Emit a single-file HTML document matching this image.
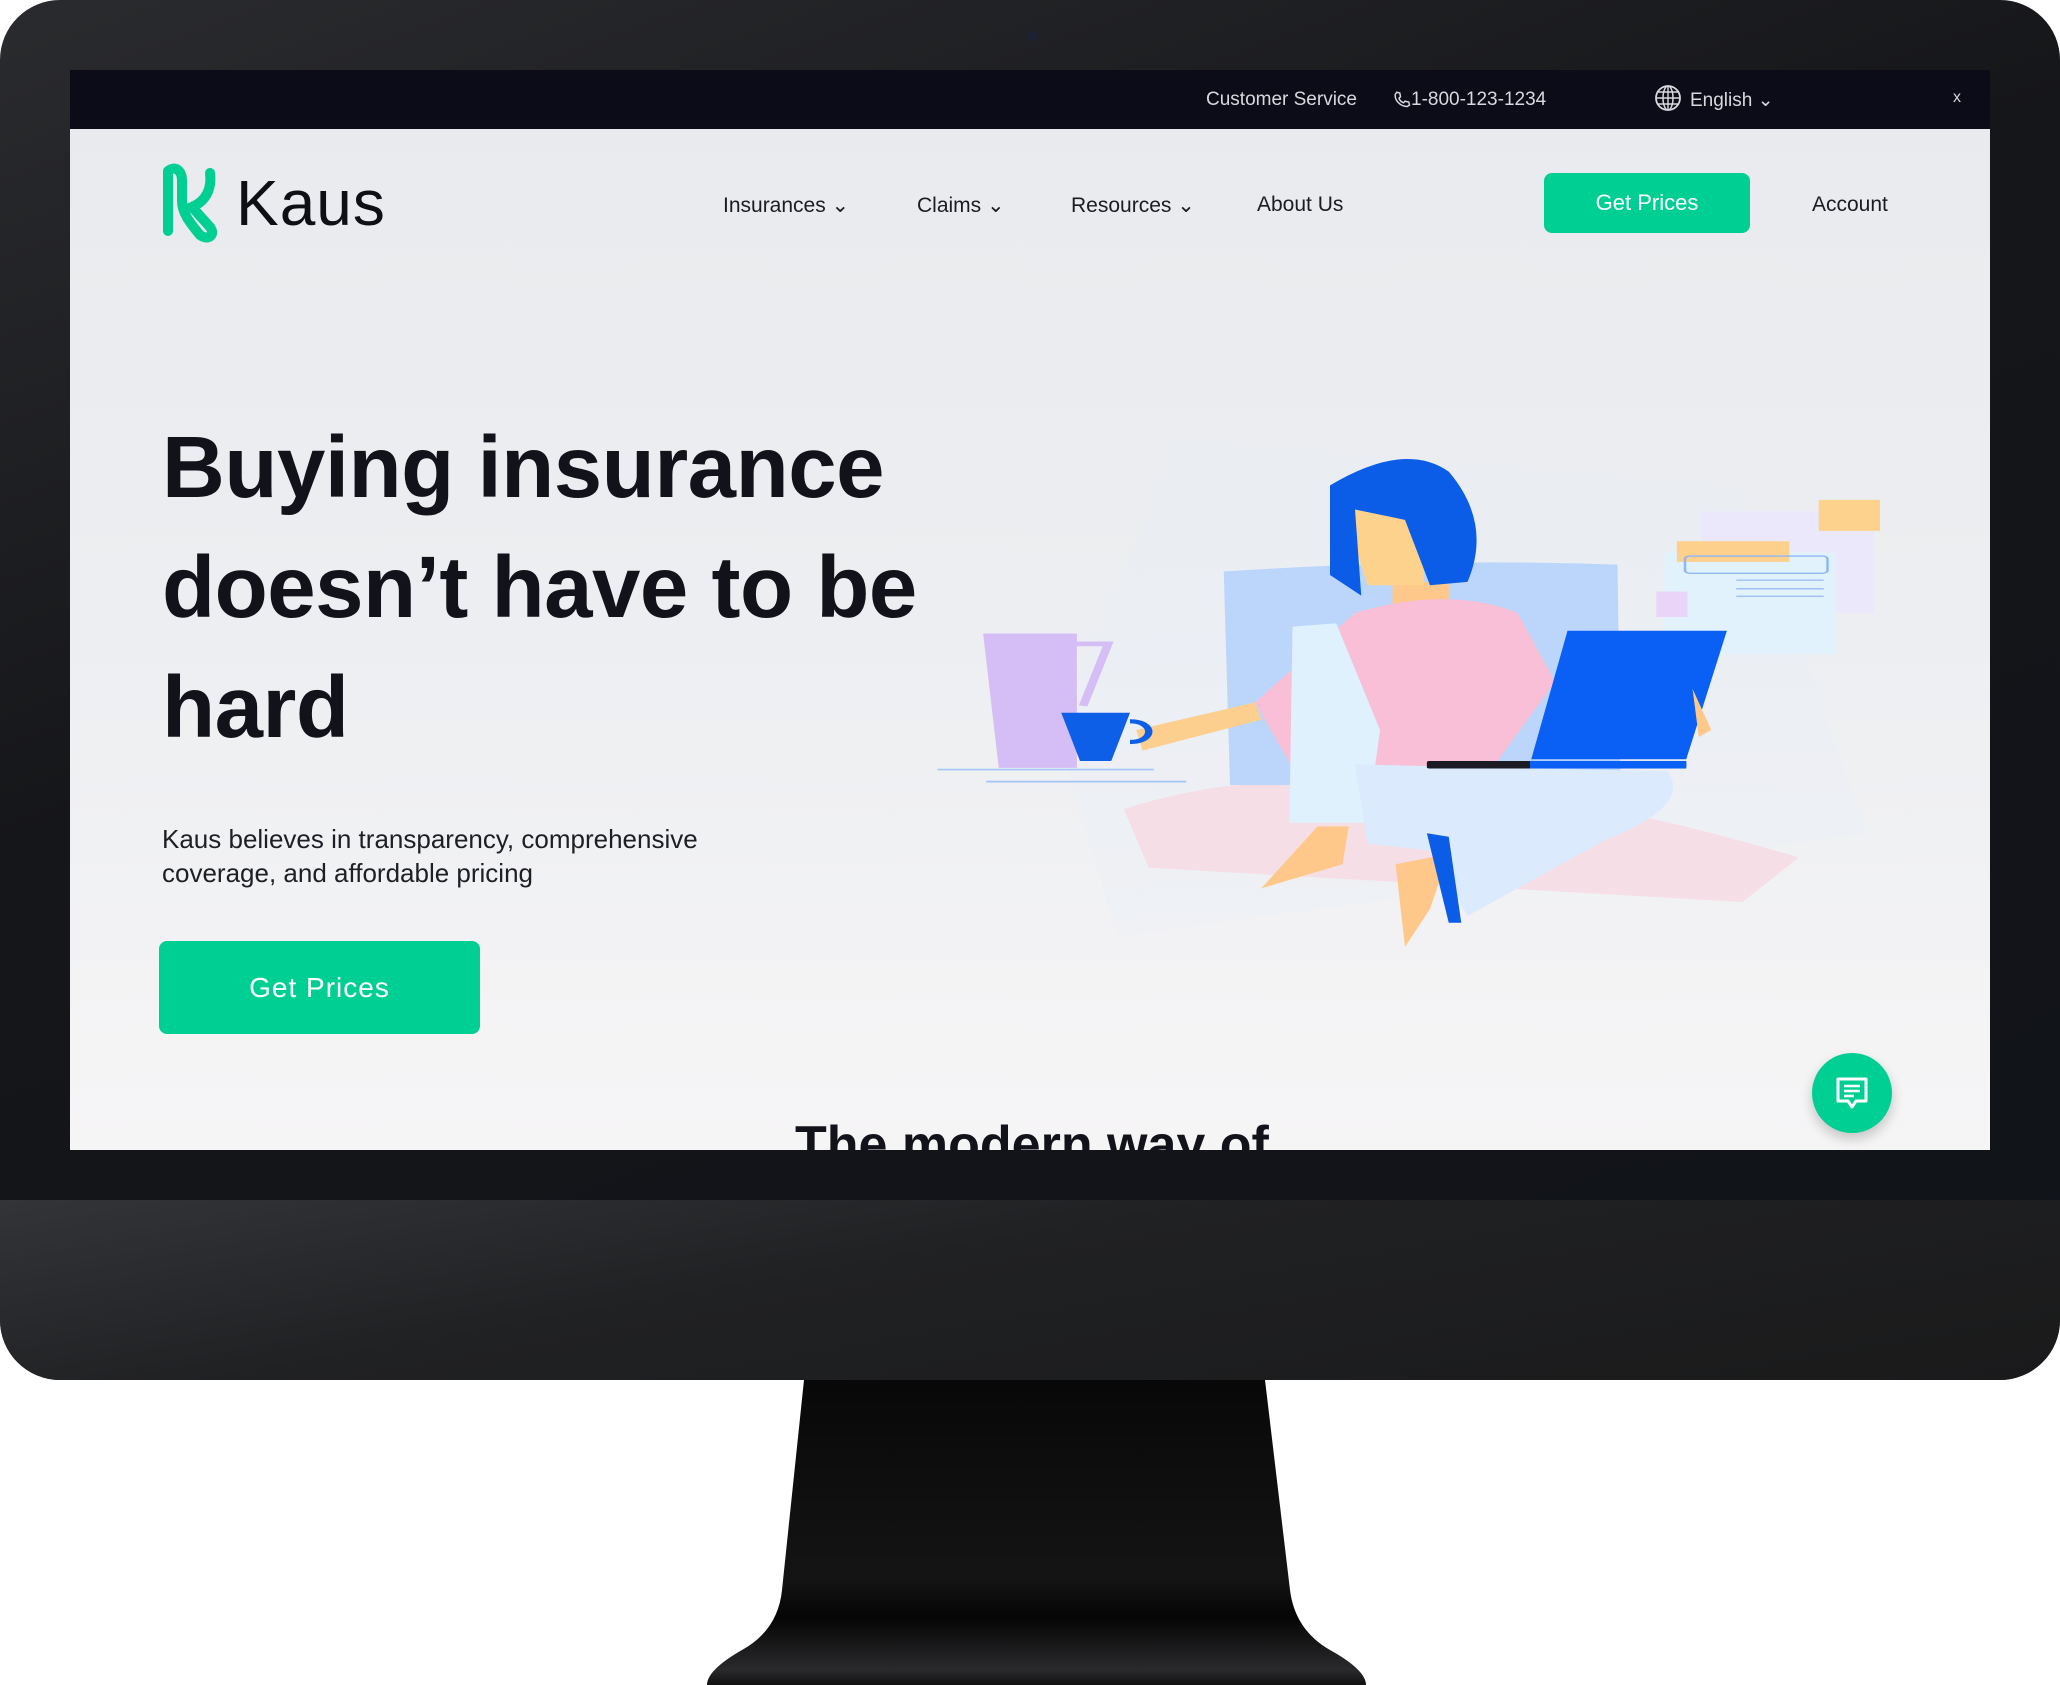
<!DOCTYPE html>
<html><head><meta charset="utf-8"><style>
*{margin:0;padding:0;box-sizing:border-box}
body{width:2060px;height:1685px;background:#fff;position:relative;overflow:hidden;font-family:"Liberation Sans",sans-serif}
.mon{position:absolute;left:0;top:0;width:2060px;height:1380px;border-radius:60px;background:linear-gradient(160deg,#2a2b2e,#151619 40%,#101319);overflow:hidden}
.chin{position:absolute;left:0;top:1200px;width:2060px;height:180px;background:linear-gradient(170deg,#333438,#202123 40%,#1a1a1b)}
.screen{position:absolute;left:70px;top:70px;width:1920px;height:1080px;background:linear-gradient(180deg,#e8eaed,#eceef1 50%,#f6f5f6);overflow:hidden}
.top{position:absolute;left:0;top:0;width:1920px;height:59px;background:#0b0c17;color:#d8d9de;font-size:19px}
.top span{position:absolute;top:19px}
.nav{position:absolute;top:123px;font-size:21px;color:#1b1c22}
.btn{position:absolute;background:#00cf93;color:#fff;border-radius:8px;text-align:center}
h1{position:absolute;left:92px;top:338px;font-size:87px;line-height:120px;font-weight:bold;color:#12131a;letter-spacing:-0.5px}
p{position:absolute;left:92px;top:752px;font-size:26px;line-height:34px;color:#1e1f25}
</style></head><body>
<div class="mon">
<div style="position:absolute;left:1027px;top:31px;width:10px;height:10px;border-radius:50%;background:#1d2233"></div>
<div class="chin"></div>
<div class="screen">
 <div class="top">
  <span style="left:1136px">Customer Service</span>
  <span style="left:1323px">
   <svg width="18" height="18" viewBox="0 0 24 24" style="vertical-align:-3px"><path d="M5 3l4 1 1 5-2 2c1 3 3 5 6 6l2-2 5 1 1 4-3 2C10 22 2 14 3 6z" fill="none" stroke="#d8d9de" stroke-width="2"/></svg>1-800-123-1234</span>
  <span style="left:1584px;top:14px"><svg width="28" height="28" viewBox="0 0 28 28"><circle cx="14" cy="14" r="12" fill="none" stroke="#d8d9de" stroke-width="1.8"/><ellipse cx="14" cy="14" rx="5" ry="12" fill="none" stroke="#d8d9de" stroke-width="1.5"/><path d="M2 14h24M4 8h20M4 20h20M14 2v24" stroke="#d8d9de" stroke-width="1.4"/></svg></span>
  <span style="left:1620px">English ⌄</span>
  <span style="left:1883px;font-size:16px">x</span>
 </div>
 <svg style="position:absolute;left:88px;top:93px" width="80" height="82" viewBox="0 0 80 82"><path d="M10 8v60M10 8c8-6 14 0 14 10v20c0 12 8 22 18 34 8 6 16 0 10-8L34 44c14-6 20-18 18-34" fill="none" stroke="#00cf93" stroke-width="10" stroke-linecap="round"/></svg>
 <div style="position:absolute;left:166px;top:96px;font-size:64px;color:#0e0f14;letter-spacing:1px">Kaus</div>
 <div class="nav" style="left:653px">Insurances ⌄</div>
 <div class="nav" style="left:847px">Claims ⌄</div>
 <div class="nav" style="left:1001px">Resources ⌄</div>
 <div class="nav" style="left:1187px">About Us</div>
 <div class="btn" style="left:1474px;top:103px;width:206px;height:60px;line-height:60px;font-size:22px">Get Prices</div>
 <div class="nav" style="left:1742px">Account</div>
 <h1>Buying insurance<br>doesn’t have to be<br>hard</h1>
 <p>Kaus believes in transparency, comprehensive<br>coverage, and affordable pricing</p>
 <div class="btn" style="left:89px;top:871px;width:321px;height:93px;line-height:93px;font-size:28px;letter-spacing:1px">Get Prices</div>
 <div style="position:absolute;left:1742px;top:983px;width:80px;height:80px;border-radius:50%;background:#00cf93;box-shadow:0 6px 12px rgba(0,0,0,.2)">
  <svg width="80" height="80" viewBox="0 0 80 80"><path d="M26 26h28v22H44l-4 6-4-6H26z" fill="none" stroke="#fff" stroke-width="3" stroke-linejoin="round"/><path d="M32 33h16M32 38h16M32 43h10" stroke="#fff" stroke-width="2.5"/></svg></div>
 <div style="position:absolute;left:725px;top:1045px;font-size:52px;font-weight:bold;color:#12131a">The modern way of</div>
 <svg style="position:absolute;left:860px;top:350px" width="980" height="540" viewBox="0 0 1568 1568" preserveAspectRatio="none">
  <path d="M200 900 L400 60 L1300 200 L1500 1200 L300 1500z" fill="#e8eefa" opacity=".3"/>
  <path d="M310 1130 Q700 900 1390 1270 L1300 1400 L350 1300z" fill="#f8d9e4" opacity=".8"/>
  <path d="M470 440 Q800 400 1100 420 L1105 1060 L480 1060z" fill="#bcd6fb"/>
  <rect x="1235" y="265" width="275" height="295" fill="#ece8fb"/>
  <rect x="1175" y="385" width="275" height="295" fill="#e1f2fd"/>
  <rect x="1422" y="232" width="98" height="90" fill="#fdd28c"/>
  <rect x="1195" y="352" width="180" height="60" fill="#fdd08c"/>
  <rect x="1208" y="395" width="228" height="50" rx="8" fill="none" stroke="#8fb6f7" stroke-width="4"/>
  <path d="M1290 465h140M1290 490h140M1290 512h140" stroke="#9ec0f7" stroke-width="4"/>
  <rect x="1162" y="498" width="50" height="74" fill="#ead5f9"/>
  <path d="M85 620h150v390H110z" fill="#d5bdf5"/>
  <path d="M230 650h55l-40 180" fill="none" stroke="#d5bdf5" stroke-width="14"/>
  <path d="M12 1015h346M90 1050h320" stroke="#a5c4f8" stroke-width="5"/>
  <path d="M330 900 L520 820 L530 870 L340 960z" fill="#fdcf8e"/>
  <path d="M210 850h110l-30 140h-50z" fill="#0d5fe8"/>
  <path d="M320 875c40 0 40 60 0 60" fill="none" stroke="#0d5fe8" stroke-width="12"/>
  <path d="M740 470h90v140h-90z" fill="#fdc88a"/>
  <path d="M680 560 Q830 480 940 560 L1000 760 L900 1010 L580 1010 L520 820z" fill="#f8bfd6"/>
  <path d="M660 250 L790 260 L790 480 L700 480z" fill="#fdd28c"/>
  <path d="M640 190 Q760 60 830 150 Q900 300 860 470 L800 480 L760 290 L680 260 L690 510 L640 450z" fill="#0b5ce6"/>
  <path d="M580 600 L650 590 L720 900 L700 1170 L575 1170z" fill="#dff1fd"/>
  <path d="M680 1000 L1180 1020 Q1220 1120 1080 1220 L860 1440 L800 1250 L700 1230z" fill="#dbeafc"/>
  <path d="M530 1360 L620 1180 L670 1180 L660 1290z" fill="#fdc88a"/>
  <path d="M745 1290 L830 1260 L800 1420 L760 1530z" fill="#fdc88a"/>
  <path d="M795 1200 L830 1210 L850 1460 L830 1460z" fill="#0b5ce6"/>
  <path d="M1020 612 L1275 612 L1210 985 L962 985z" fill="#0a5ff4"/>
  <rect x="795" y="990" width="415" height="22" rx="4" fill="#1a1b24"/>
  <rect x="960" y="990" width="250" height="22" fill="#0a5ff4"/>
  <path d="M1220 780 L1250 900 L1230 920z" fill="#fdc88a"/>
 </svg>
</div>
</div>
<svg style="position:absolute;left:0;top:1380px" width="2060" height="305" viewBox="0 1380 2060 305">
 <defs><linearGradient id="g" x1="0" y1="0" x2="0" y2="1"><stop offset="0" stop-color="#080808"/><stop offset=".65" stop-color="#141415"/><stop offset=".78" stop-color="#050505"/><stop offset=".95" stop-color="#2a2a2d"/><stop offset="1" stop-color="#111"/></linearGradient></defs>
 <path d="M804 1380 H1265 L1290 1590 Q1295 1630 1330 1650 Q1366 1670 1366 1685 H707 Q707 1670 742 1650 Q778 1630 782 1590z" fill="url(#g)"/>
</svg>
</body></html>
